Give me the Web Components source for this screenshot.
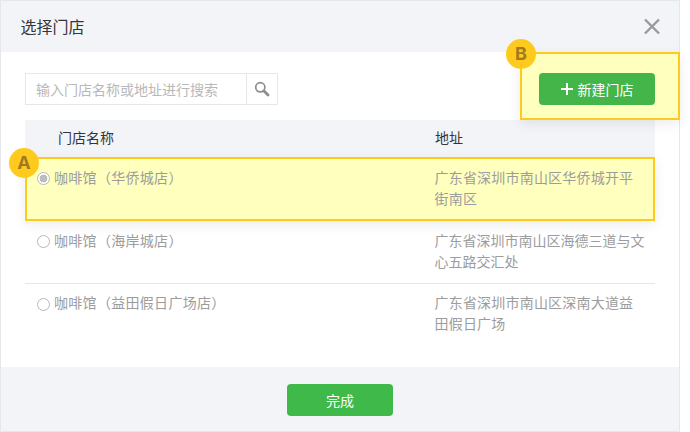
<!DOCTYPE html>
<html lang="zh">
<head>
<meta charset="utf-8">
<title>选择门店</title>
<style>
  html, body { margin: 0; background: #fff; }
  body { font: 14px/21px "Noto Sans CJK SC", "Liberation Sans", sans-serif; }
</style>
</head>
<body>
<store-dialog heading="选择门店">
  <search-box slot="tools" placeholder="输入门店名称或地址进行搜索"></search-box>
  <call-out slot="tools" letter="B" class="new-store">
    <green-button plus wide="116">新建门店</green-button>
  </call-out>
  <store-row selected marked="A" tracking=".2px" address="广东省深圳市南山区华侨城开平街南区">咖啡馆（华侨城店）</store-row>
  <store-row address="广东省深圳市南山区海德三道与文心五路交汇处">咖啡馆（海岸城店）</store-row>
  <store-row divided tracking=".2px" address="广东省深圳市南山区深南大道益田假日广场">咖啡馆（益田假日广场店）</store-row>
  <green-button slot="footer" wide="106" tone="#3eb94a">完成</green-button>
</store-dialog>

<script>
class StoreDialog extends HTMLElement {
  constructor() {
    super();
    const heading = this.getAttribute('heading') || '';
    this.attachShadow({ mode: 'open' }).innerHTML = `
      <style>
        :host {
          display: flex;
          flex-direction: column;
          width: 680px;
          height: 432px;
          box-sizing: border-box;
          border: 1px solid #e4e8eb;
          background: #fff;
        }
        header {
          display: flex;
          align-items: center;
          justify-content: space-between;
          height: 51px;
          padding: 0 19px 0 19.5px;
          background: #f3f4f8;
          color: #353535;
          font-size: 16px;
        }
        header svg { display: block; }
        main { flex: 1; padding: 21px 24px 0; }
        .tools {
          display: flex;
          justify-content: space-between;
          height: 32px;
          margin-bottom: 15px;
        }
        .head {
          display: grid;
          grid-template-columns: 410px 1fr;
          height: 37px;
          line-height: 35px;
          background: #f3f4f8;
          color: #353535;
        }
        .head span:first-child { padding-left: 33px; }
        footer {
          display: flex;
          justify-content: center;
          align-items: center;
          height: 64px;
          box-sizing: border-box;
          padding-top: 2px;
          background: #f3f4f8;
        }
      </style>
      <header>
        <span>${heading}</span>
        <svg width="18" height="18" viewBox="0 0 18 18"><path d="M3 1.5l14 14M17 1.5l-14 14" stroke="#9a9a9a" stroke-width="2.4" fill="none"/></svg>
      </header>
      <main>
        <div class="tools"><slot name="tools"></slot></div>
        <div class="head"><span>门店名称</span><span>地址</span></div>
        <slot></slot>
      </main>
      <footer><slot name="footer"></slot></footer>
    `;
  }
}

class SearchBox extends HTMLElement {
  constructor() {
    super();
    const placeholder = this.getAttribute('placeholder') || '';
    this.attachShadow({ mode: 'open' }).innerHTML = `
      <style>
        :host {
          display: flex;
          width: 253px;
          height: 32px;
          box-sizing: border-box;
          border: 1px solid #e4e8eb;
        }
        .text {
          flex: 1;
          padding-left: 10px;
          line-height: 30px;
          color: #b8b8b8;
          white-space: nowrap;
        }
        .btn {
          display: flex;
          align-items: center;
          justify-content: center;
          width: 30px;
          border-left: 1px solid #e4e8eb;
        }
      </style>
      <span class="text">${placeholder}</span>
      <span class="btn">
        <svg width="16" height="16" viewBox="0 0 16 16" fill="none" stroke="#8d8d8d">
          <circle cx="6.3" cy="6.3" r="4.6" stroke-width="1.7"/>
          <path d="M10 10l4 4" stroke-width="2.8" stroke-linecap="round"/>
        </svg>
      </span>
    `;
  }
}

class GreenButton extends HTMLElement {
  constructor() {
    super();
    const wide = this.getAttribute('wide') || 100;
    const tone = this.getAttribute('tone') || '#44b549';
    const plus = this.hasAttribute('plus')
      ? `<svg width="12" height="12" viewBox="0 0 12 12"><path d="M6 0v12M0 6h12" stroke="#fff" stroke-width="2"/></svg>`
      : '';
    this.attachShadow({ mode: 'open' }).innerHTML = `
      <style>
        :host {
          display: flex;
          align-items: center;
          justify-content: center;
          gap: 5px;
          width: ${wide}px;
          height: 32px;
          border-radius: 4px;
          background: ${tone};
          color: #fff;
        }
      </style>
      ${plus}<slot></slot>
    `;
  }
}

class CallOut extends HTMLElement {
  constructor() {
    super();
    const letter = this.getAttribute('letter') || '';
    this.attachShadow({ mode: 'open' }).innerHTML = `
      <style>
        :host {
          display: block;
          position: relative;
          box-sizing: border-box;
          width: 160px;
          height: 68px;
          margin: -21px -25px 0 0;
          padding: 19px 23px 0 17px;
          border: 2px solid #ffca1e;
          background: #ffffbe;
          box-shadow: 0 4px 12px rgba(0, 0, 0, .08);
        }
        .badge {
          position: absolute;
          left: -16px;
          top: -15px;
          width: 30px;
          height: 30px;
          border-radius: 50%;
          background: #ffca1e;
          color: #a07a20;
          font: bold 18px/30px "Inter", "Liberation Sans", sans-serif;
          text-align: center;
        }
      </style>
      <span class="badge">${letter}</span>
      <slot></slot>
    `;
  }
}

class StoreRow extends HTMLElement {
  constructor() {
    super();
    const address = this.getAttribute('address') || '';
    const marked = this.getAttribute('marked');
    const tracking = this.getAttribute('tracking') || '0';
    this.attachShadow({ mode: 'open' }).innerHTML = `
      <style>
        :host {
          display: grid;
          grid-template-columns: 409.5px 210.5px;
          position: relative;
          box-sizing: border-box;
          padding: 9px 0 11px;
          color: #9c9c9c;
        }
        :host([divided]) { border-top: 1px solid #e4e8eb; padding: 8px 0 12px; }
        :host([marked]) {
          padding: 8px 0 10px;
          border: 2px solid #ffca1e;
          background: #ffffbe;
          box-shadow: 0 4px 12px rgba(0, 0, 0, .08);
        }
        :host([marked]) .name { padding-left: 10px; }
        :host([marked]) .addr { margin-left: -2px; }
        :host([divided]) .radio { margin-top: 6px; }
        .name { display: flex; align-items: flex-start; gap: 4px; padding-left: 12px; letter-spacing: .3px; }
        .radio {
          flex: none;
          width: 13px;
          height: 13px;
          margin-top: 5px;
          box-sizing: border-box;
          border: 1px solid #b8b8b8;
          border-radius: 50%;
          background: #fff;
        }
        :host([selected]) .radio {
          background: radial-gradient(circle, #bdbdbd 0 3.6px, #fff 4.2px);
        }
        .addr { letter-spacing: ${tracking}; }
        .badge {
          position: absolute;
          left: -18px;
          top: -11px;
          width: 30px;
          height: 30px;
          border-radius: 50%;
          background: #ffca1e;
          color: #a07a20;
          font: bold 18px/30px "Inter", "Liberation Sans", sans-serif;
          text-align: center;
        }
      </style>
      ${marked ? `<span class="badge">${marked}</span>` : ''}
      <div class="name"><span class="radio"></span><span><slot></slot></span></div>
      <div class="addr">${address}</div>
    `;
  }
}

customElements.define('store-dialog', StoreDialog);
customElements.define('search-box', SearchBox);
customElements.define('green-button', GreenButton);
customElements.define('call-out', CallOut);
customElements.define('store-row', StoreRow);
</script>
</body>
</html>
